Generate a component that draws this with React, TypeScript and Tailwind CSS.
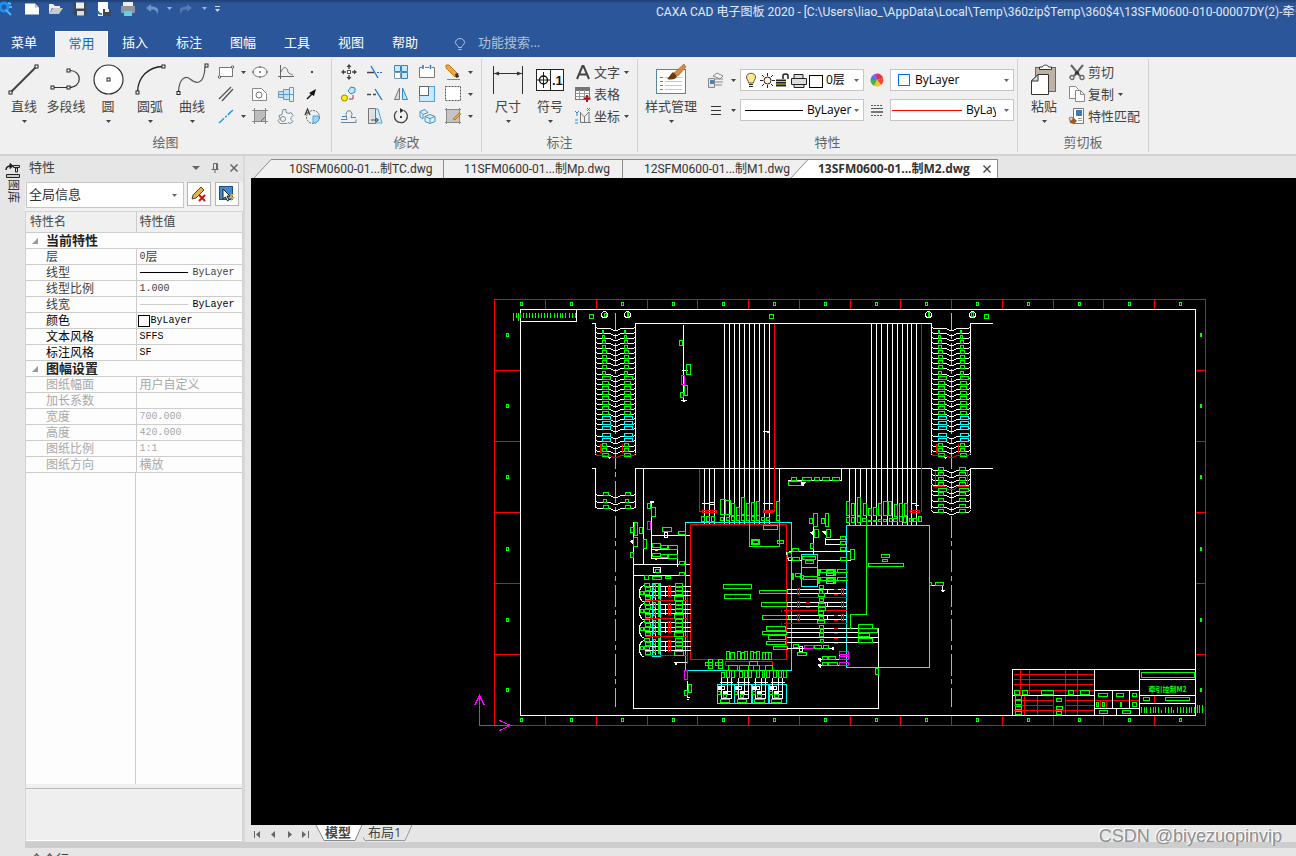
import clsx from 'clsx';
import type { ReactNode } from 'react';

const UI_FONT = "font-['Open_Sans','Noto_Sans_CJK_SC',sans-serif]";
const NARROW_FONT = "font-['Roboto','Noto_Sans_CJK_SC',sans-serif]";

/* ---------- small shared pieces ---------- */

function Caret({ className = 'text-[#444]' }: { className?: string }) {
  return (
    <svg className={clsx('h-[3px] w-[5px] shrink-0', className)} viewBox="0 0 5 3" fill="currentColor">
      <path d="M0 0h5L2.5 3z" />
    </svg>
  );
}

interface IconProps {
  size?: 'sm' | 'lg';
  children: ReactNode;
}

// Stroke-based drawing on an 18px (sm) or 36px (lg) grid
function Icon({ size = 'sm', children }: IconProps) {
  return (
    <svg
      className={size === 'lg' ? 'h-9 w-9 shrink-0' : 'h-[18px] w-[18px] shrink-0'}
      viewBox={size === 'lg' ? '0 0 36 36' : '0 0 18 18'}
      fill="none"
      stroke="#555"
      strokeWidth={1}
    >
      {children}
    </svg>
  );
}

function Handle({ x, y }: { x: number; y: number }) {
  return <rect x={x - 1.5} y={y - 1.5} width={3} height={3} fill="#fff" stroke="#222" />;
}

/* ---------- ribbon icons ---------- */

const bigIcons = {
  line: (
    <Icon size="lg">
      <path d="M5 31L31 5" stroke="#444" strokeWidth={2} />
      <Handle x={4.5} y={31.5} />
      <Handle x={30.5} y={5.5} />
    </Icon>
  ),
  polyline: (
    <Icon size="lg">
      <path d="M5 26.5h16c14 0 13-17 1-17" stroke="#333" strokeWidth={1.2} />
      <Handle x={4.5} y={26.5} />
      <Handle x={20.5} y={26.5} />
      <Handle x={20.5} y={9.5} />
    </Icon>
  ),
  circle: (
    <Icon size="lg">
      <circle cx={18.5} cy={18.5} r={14.5} fill="#fff" stroke="#333" strokeWidth={1.2} />
      <Handle x={18.5} y={18.5} />
    </Icon>
  ),
  arc: (
    <Icon size="lg">
      <path d="M5.5 31C6 16 16 6 31 5.5" stroke="#222" strokeWidth={1.3} />
      <Handle x={5.5} y={31.5} />
      <Handle x={31.5} y={5.5} />
    </Icon>
  ),
  curve: (
    <Icon size="lg">
      <path d="M4.5 31C5 18 11 14 16 18s14 8 15-12" stroke="#555" strokeWidth={1.2} />
      <Handle x={4.5} y={32} />
      <Handle x={32.5} y={4.5} />
    </Icon>
  ),
  dimension: (
    <Icon size="lg">
      <path d="M3.5 5v28M32.5 5v28M4 12.5h28" stroke="#333" />
      <path d="M4 12.5l5-2v4zM32 12.5l-5-2v4z" fill="#333" stroke="none" />
    </Icon>
  ),
  symbol: (
    <Icon size="lg">
      <rect x={4.5} y={8.5} width={27} height={21} fill="#fff" stroke="#222" />
      <path d="M18.5 8v22M5 19h13M11.5 11v16" stroke="#222" />
      <circle cx={11.5} cy={19} r={4} stroke="#111" strokeWidth={1.4} />
      <text x={20} y={24} fontSize={13} fontWeight={700} fill="#111" stroke="none" fontFamily="Liberation Sans, sans-serif">
        .1
      </text>
    </Icon>
  ),
  styles: (
    <Icon size="lg">
      <rect x={3.5} y={8.5} width={29} height={24} fill="#fff" stroke="#5b82a6" />
      <path d="M7 16.5h3M7 20.5h3M7 24.5h3M7 28.5h3" stroke="#5b82a6" />
      <path d="M12 16.5h17M12 20.5h17M12 24.5h17M12 28.5h17" stroke="#b9c9dc" />
      <path d="M31 3l2 3-8 9-4-3z" fill="#d58b45" stroke="#9a5b22" strokeWidth={0.6} />
      <path d="M20 11l4 4c-1 4-6 4-10 3 3-2 3-5 6-7z" fill="#6b3b10" stroke="none" />
    </Icon>
  ),
  paste: (
    <Icon size="lg">
      <rect x={9.5} y={6.5} width={20} height={24} fill="#beb2a6" stroke="#666" />
      <path d="M13.5 8.5V6h3c0-2.500 6-2.500 6 0h3v2.500z" fill="#fff" stroke="#333" />
      <path d="M12 13.5h10.500v20h-17V20z" fill="#fff" stroke="#333" />
      <path d="M5.500 20H12v-6.500z" fill="#ddd" stroke="#333" />
    </Icon>
  ),
};

const smallIcons = {
  rect: (
    <Icon>
      <rect x={2.5} y={4.5} width={13} height={9} fill="#fff" stroke="#777" />
      <circle cx={2.5} cy={14} r={1.2} fill="#fff" />
      <circle cx={15.5} cy={4} r={1.2} fill="#fff" />
    </Icon>
  ),
  parallel: (
    <Icon>
      <path d="M2 14L14 2M5 16L16 4" stroke="#555" strokeWidth={1.3} />
    </Icon>
  ),
  centerline: (
    <Icon>
      <path d="M2 16L16 3" stroke="#1f9ade" strokeWidth={1.5} strokeDasharray="7 1.5 2 1.5" />
    </Icon>
  ),
  ellipse: (
    <Icon>
      <ellipse cx={9} cy={9} rx={7} ry={5} fill="#fff" stroke="#777" />
      <path d="M9 8v2M8 9h2M9 3v2M9 13v2M1 9h2M15 9h2" stroke="#666" />
    </Icon>
  ),
  shape: (
    <Icon>
      <path d="M1.5 3.5h9l5 5v7h-14z" fill="#fff" stroke="#888" />
      <circle cx={8} cy={10} r={3} stroke="#777" />
    </Icon>
  ),
  hatch: (
    <Icon>
      <rect x={3.5} y={3.5} width={11} height={11} fill="#bdbdbd" stroke="#777" />
      <path d="M1 3.5h16M1 14.5h16M3.5 1v16M14.5 1v16" stroke="#888" />
      <path d="M10 14l4-4" stroke="#666" />
    </Icon>
  ),
  formula: (
    <Icon>
      <path d="M3.5 2v14M1 13.5h16" stroke="#666" />
      <path d="M4 9c2-6 6-6 7 0 1 2 3 2 5 3" stroke="#777" />
    </Icon>
  ),
  shaft: (
    <Icon>
      <path d="M1.5 6.5h5v6h-5zM6.5 4.5h6v10h-6z" fill="#bfe1f5" stroke="#7d95a8" />
      <path d="M12.5 2.5h4v14h-4z" fill="#dff1fb" stroke="#5d9bce" />
      <path d="M1 9.5h16" stroke="#5d9bce" />
    </Icon>
  ),
  gear: (
    <Icon>
      <path
        d="M6 2.500h3v3l3 1 2-1 2 3-2 2v2l2 2-3 2-2-1-1 1H3l-2-3 2-2-1-3 3-1z"
        fill="#f4f4f4"
        stroke="#7b8b99"
      />
      <circle cx={6} cy={12} r={2.5} stroke="#7b8b99" />
    </Icon>
  ),
  point: (
    <Icon>
      <rect x={8} y={8} width={2} height={2} fill="#444" stroke="none" />
    </Icon>
  ),
  arrow: (
    <Icon>
      <path d="M4 14l6-6" stroke="#111" strokeWidth={1.5} />
      <path d="M13 4l-2 7-5-3z" fill="#111" stroke="none" />
    </Icon>
  ),
  region: (
    <Icon>
      <circle cx={10} cy={10} r={6.5} stroke="#666" strokeDasharray="2 1" />
      <path d="M10 9h6v3a6 6 0 0 1-6 4z" fill="#9fd6f5" stroke="#4aa3df" />
      <path d="M2 8l2.500-6L7 8M3 6h3.500" stroke="#333" strokeWidth={1.2} />
    </Icon>
  ),
  move: (
    <Icon>
      <path d="M9 2v4M9 12v4M2 9h4M12 9h4" stroke="#444" strokeWidth={1.5} />
      <path d="M9 1L6.500 4h5zM9 17l-2.500-3h5zM1 9l3-2.500v5zM17 9l-3-2.500v5z" fill="#444" stroke="none" />
      <rect x={7.5} y={7.5} width={3} height={3} fill="#fff" stroke="#555" />
    </Icon>
  ),
  trim: (
    <Icon>
      <path d="M1 9.5h7" stroke="#444" strokeWidth={1.5} />
      <path d="M5 3l7 12" stroke="#1d74c4" strokeWidth={1.3} />
      <path d="M11 9.5h6" stroke="#1d74c4" strokeDasharray="2 1" />
    </Icon>
  ),
  array: (
    <Icon>
      <path d="M2.5 2.5h6v6h-6zM9.5 2.5h6v6h-6zM9.5 9.5h6v6h-6z" fill="#c8eafc" stroke="#2d87c9" />
      <path d="M2.5 9.5h6v6h-6z" fill="#fff" stroke="#7c96a8" />
    </Icon>
  ),
  breakRect: (
    <Icon>
      <path d="M4 4.500H1.500v10h15v-10H14M7 4.500h4" fill="#fff" stroke="#777" />
      <path d="M5 2v4M12.5 2v4" stroke="#1d74c4" strokeWidth={1.5} />
    </Icon>
  ),
  erase: (
    <Icon>
      <path d="M2 2l3 0 9 9-3 3-9-9z" fill="#f3a73b" stroke="#c07a1a" />
      <path d="M11 11l3-1 1 4-3 1z" fill="#333" stroke="none" />
      <path d="M3 16.5h13" stroke="#888" />
    </Icon>
  ),
  copyMove: (
    <Icon>
      <circle cx={4.5} cy={13} r={3} fill="#fff200" stroke="#8f8612" />
      <path d="M8 6l3-4 4 1v4l-4 2z" fill="#bfe6fb" stroke="#2d87c9" />
      <path d="M9 14h4v-4" stroke="#a33" />
    </Icon>
  ),
  extend: (
    <Icon>
      <path d="M1 9.5h4M7 9.5h3" stroke="#444" strokeWidth={1.5} />
      <path d="M9 4l7 11" stroke="#1d74c4" strokeWidth={1.3} />
    </Icon>
  ),
  mirror: (
    <Icon>
      <path d="M7.5 3v11.500h-5z" fill="#ddd" stroke="#777" />
      <path d="M10.5 3v11.500h5z" fill="#bfe6fb" stroke="#2d87c9" />
    </Icon>
  ),
  scale: (
    <Icon>
      <rect x={1.5} y={1.5} width={15} height={15} fill="#c8eafc" stroke="#4aa3df" />
      <rect x={1.5} y={1.5} width={9} height={9} fill="#fff" stroke="#666" />
    </Icon>
  ),
  select: (
    <Icon>
      <rect x={1.5} y={1.5} width={15} height={14} fill="#fff" stroke="#555" strokeDasharray="2 1" />
    </Icon>
  ),
  offset: (
    <Icon>
      <path d="M1 12.5h6l-1-5c0-5 6-5 6 0l-1 3h5M1 15.5h15v-3" stroke="#6b8396" />
      <path d="M2 9.5h4" stroke="#2d87c9" />
    </Icon>
  ),
  stretch: (
    <Icon>
      <path d="M9 2h3l4 14H9z" fill="#d4eefb" stroke="#4aa3df" />
      <path d="M2.5 1.5h7v15h-7z" fill="#e0e0e0" stroke="#777" />
      <path d="M5 13h7M10 11l2.500 2-2.500 2" stroke="#444" />
    </Icon>
  ),
  rotate: (
    <Icon>
      <path d="M5 4a6.500 6.500 0 1 0 7-.5" stroke="#444" strokeWidth={1.3} />
      <path d="M8 1l4 2.500-4 2.500z" fill="#333" stroke="none" />
      <rect x={8} y={9} width={2} height={2} fill="#333" stroke="none" />
    </Icon>
  ),
  explode: (
    <Icon>
      <path
        d="M2 4.500l5-2 3 3-5 2zM2 5v5l3 2V7.500M7 9.500l5-2 5 2v5l-5 2-5-2zM7 9.500l5 2 5-2M12 11.500v5"
        fill="#dff1fb"
        stroke="#3f92cd"
      />
    </Icon>
  ),
  hatchEdit: (
    <Icon>
      <rect x={2.5} y={2.5} width={13} height={13} fill="#c4c4c4" stroke="#777" />
      <path d="M1 2.5h16M1 15.5h16M2.5 1v16M15.5 1v16" stroke="#888" />
      <path d="M9 12l6-6 2 1-6 6z" fill="#f3a73b" stroke="#8a5a15" strokeWidth={0.6} />
    </Icon>
  ),
  text: (
    <Icon>
      <path d="M3 16L8.500 3h1L15 16M5.500 11.500h7" stroke="#444" strokeWidth={2} />
    </Icon>
  ),
  table: (
    <Icon>
      <rect x={1.5} y={2.5} width={14} height={12} fill="#fff" stroke="#777" />
      <path d="M1.5 3h14v2.500h-14z" fill="#777" stroke="#777" />
      <path d="M1.5 8.500h14M1.500 11.500h14M5.500 5v9.500M10.500 5v9.500" stroke="#999" />
      <path d="M13 10v7M9.500 13.500h7" stroke="#b3171b" strokeWidth={2} />
    </Icon>
  ),
  coord: (
    <Icon>
      <path d="M6.5 5v10.500H17M6.500 6l4 4v5M10 10l5-5v10" stroke="#777" />
      <path d="M1 4l2 2 2-2M3 6v3M13 1l3 3M16 1l-3 3M1 13h3M1 16h3" stroke="#2d87c9" />
    </Icon>
  ),
  layers: (
    <Icon>
      <path d="M6 5l4-3 6 3-3 3zM8 8h8M8 11h8M8 14h7" stroke="#888" />
      <path d="M1.5 7.500h6v9h-6z" fill="#dbe6ef" stroke="#888" />
      <rect x={3} y={9} width={4} height={4} fill="#4d86b5" stroke="none" />
    </Icon>
  ),
  lineStyle: (
    <Icon>
      <path d="M4 5.500h10M4 9.500h10M4 13.500h10" stroke="#333" />
    </Icon>
  ),
  lineWidth: (
    <Icon>
      <path d="M3 4.500h12M3 14.500h12" stroke="#555" strokeDasharray="2 1" />
      <path d="M3 7.500h12" stroke="#555" />
      <path d="M3 11h12" stroke="#777" strokeWidth={2} />
    </Icon>
  ),
  colorWheel: (
    <Icon>
      <g stroke="none">
        <path d="M9 9V2.500A6.500 6.500 0 0 1 15 7z" fill="#e3353b" />
        <path d="M9 9l6-2a6.500 6.500 0 0 1-2 7z" fill="#f0483a" />
        <path d="M9 9l4 5a6.500 6.500 0 0 1-7 .7z" fill="#f6c21c" />
        <path d="M9 9l-3 5.700A6.500 6.500 0 0 1 2.500 9z" fill="#46b04a" />
        <path d="M9 9H2.500A6.500 6.500 0 0 1 5 4z" fill="#3f7fe8" />
        <path d="M9 9L5 4a6.500 6.500 0 0 1 4-1.500z" fill="#a34be0" />
      </g>
    </Icon>
  ),
  cut: (
    <Icon>
      <path d="M3 2l9 11M15 2L6 13" stroke="#666" strokeWidth={2} />
      <path d="M7 8.500h4v3H7z" fill="#333" stroke="none" />
      <circle cx={4} cy={14.5} r={2} stroke="#666" strokeWidth={1.3} />
      <circle cx={14} cy={14.5} r={2} stroke="#666" strokeWidth={1.3} />
    </Icon>
  ),
  copy: (
    <Icon>
      <path d="M1.5 1.5h6l3 3v9h-9z" fill="#fff" stroke="#888" />
      <path d="M7.5 5.5h5l4 4v7h-9z" fill="#fff" stroke="#888" />
      <path d="M12.5 5.5v4h4" stroke="#888" />
    </Icon>
  ),
  match: (
    <Icon>
      <path d="M5.5 1.5h10v15h-10z" fill="#fff" stroke="#777" />
      <rect x={8} y={3} width={6} height={6} fill="#3d7ab5" stroke="none" />
      <path d="M10 11.5h4M10 13.5h4" stroke="#999" />
      <path d="M1 11l4-1 4 4-3 3-4-1z" fill="#a55b18" stroke="none" />
      <path d="M1 11l3-1 1 2-2 2z" fill="#ddd" stroke="#888" />
    </Icon>
  ),
};

/* ---------- ribbon building blocks ---------- */

function BigButton({ icon, label, menu = true, wide }: { icon: ReactNode; label: string; menu?: boolean; wide?: boolean }) {
  return (
    <button className={clsx('flex shrink-0 flex-col items-center whitespace-nowrap', wide ? 'w-[58px]' : 'w-[42px]')}>
      {icon}
      <span className="h-5 leading-[19px]">{label}</span>
      <span className="flex h-2 items-center">{menu && <Caret />}</span>
    </button>
  );
}

function SmallButton({ icon, label, menu }: { icon: ReactNode; label: string; menu?: boolean }) {
  return (
    <button aria-label={label} className="flex h-[22px] shrink-0 items-center">
      <span className="flex w-[26px] justify-center">{icon}</span>
      {menu && <Caret className="ml-0.5 text-[#444]" />}
    </button>
  );
}

function TextButton({ icon, label, menu }: { icon: ReactNode; label: string; menu?: boolean }) {
  return (
    <button className="flex h-[22px] items-center gap-0.5 leading-5 whitespace-nowrap">
      {icon}
      {label}
      {menu && <Caret className="ml-0.5 text-[#444]" />}
    </button>
  );
}

function Group({ title, width, inset, children }: { title: string; width: string; inset: string; children: ReactNode }) {
  return (
    <section className={clsx('my-0.5 flex shrink-0 flex-col border-r border-[#d2d2d2]', width)}>
      <div className={clsx('flex flex-1 items-start pt-0.5', inset)}>{children}</div>
      <h2 className="h-5 text-center leading-5 text-[#666]">{title}</h2>
    </section>
  );
}

function PropertySelect({ label, text, art, className }: { label: string; text: string; art: ReactNode; className?: string }) {
  return (
    <div className="flex h-[22px] w-[124px] shrink-0 items-center overflow-hidden border border-[#c6c6c6] bg-white pr-1">
      {art}
      <select aria-label={label} className={clsx('min-w-0 flex-1 appearance-none bg-transparent text-[12px] leading-5 text-black', className)}>
        <option>{text}</option>
      </select>
      <Caret className="text-[#666]" />
    </div>
  );
}

function LayerArt() {
  return (
    <svg className="h-5 w-[85px] shrink-0" viewBox="0 0 85 20" fill="none" stroke="#222">
      <path d="M7.5 13c0-3-2-3-2-6 0-5 9-5 9 0 0 3-2 3-2 6z" fill="#ffe98a" stroke="#555" />
      <path d="M8 14.500h4M8 16.500h4" />
      <circle cx={26.5} cy={10.5} r={3.5} fill="#fff3d8" />
      <path d="M26.5 3v3M26.500 15v3M19 10.500h3M31 10.500h3M21 5l2 2M30 14l2 2M32 5l-2 2M23 14l-2 2" />
      <path d="M35 9.500h10v7H35z" fill="#222" stroke="none" />
      <path d="M35 11.500h10M35 14h10" stroke="#ff0" strokeWidth={0.8} />
      <path d="M42 9V5.500c0-2 5-2 5 0V9" strokeWidth={1.5} />
      <path d="M53 8V4.500h9V8M50.500 8.500h15v6h-15zM53 14.500v3h10v-3" fill="#ddd" />
      <rect x={68.5} y={5.5} width={13} height={12} fill="#fff" stroke="#000" />
    </svg>
  );
}

function Ribbon() {
  const i = smallIcons;
  return (
    <div className="flex h-[99px] shrink-0 overflow-hidden border-b-2 border-[#d2d2d2] bg-[#f0f0f0] text-[13px] text-[#444]">
      <Group title="绘图" width="w-[332px]" inset="pl-[3px]">
        <BigButton icon={bigIcons.line} label="直线" />
        <BigButton icon={bigIcons.polyline} label="多段线" menu={false} />
        <BigButton icon={bigIcons.circle} label="圆" />
        <BigButton icon={bigIcons.arc} label="圆弧" />
        <BigButton icon={bigIcons.curve} label="曲线" />
        <div className="grid grid-cols-[34px_26px_26px_26px]">
          <SmallButton icon={i.rect} label="矩形" menu />
          <SmallButton icon={i.ellipse} label="椭圆" />
          <SmallButton icon={i.formula} label="公式曲线" />
          <SmallButton icon={i.point} label="点" />
          <SmallButton icon={i.parallel} label="平行线" />
          <SmallButton icon={i.shape} label="多边形" />
          <SmallButton icon={i.shaft} label="孔轴" />
          <SmallButton icon={i.arrow} label="箭头" />
          <SmallButton icon={i.centerline} label="中心线" menu />
          <SmallButton icon={i.hatch} label="剖面线" />
          <SmallButton icon={i.gear} label="齿形" />
          <SmallButton icon={i.region} label="局部放大" />
        </div>
      </Group>
      <Group title="修改" width="w-[150px]" inset="pl-1">
        <div className="grid grid-cols-[26px_26px_26px_26px_36px]">
          <SmallButton icon={i.move} label="平移" />
          <SmallButton icon={i.trim} label="裁剪" />
          <SmallButton icon={i.array} label="阵列" />
          <SmallButton icon={i.breakRect} label="打断" />
          <SmallButton icon={i.erase} label="删除" menu />
          <SmallButton icon={i.copyMove} label="平移复制" />
          <SmallButton icon={i.extend} label="延伸" />
          <SmallButton icon={i.mirror} label="镜像" />
          <SmallButton icon={i.scale} label="缩放" />
          <SmallButton icon={i.select} label="选择" menu />
          <SmallButton icon={i.offset} label="等距线" />
          <SmallButton icon={i.stretch} label="拉伸" />
          <SmallButton icon={i.rotate} label="旋转" />
          <SmallButton icon={i.explode} label="分解" />
          <SmallButton icon={i.hatchEdit} label="编辑剖面线" menu />
        </div>
      </Group>
      <Group title="标注" width="w-[156px]" inset="pl-[5px]">
        <BigButton icon={bigIcons.dimension} label="尺寸" />
        <BigButton icon={bigIcons.symbol} label="符号" />
        <div className="flex flex-col pl-[3px]">
          <TextButton icon={i.text} label="文字" menu />
          <TextButton icon={i.table} label="表格" />
          <TextButton icon={i.coord} label="坐标" menu />
        </div>
      </Group>
      <Group title="特性" width="w-[380px]" inset="pl-1">
        <BigButton icon={bigIcons.styles} label="样式管理" wide />
        <div className="flex flex-col gap-2 pt-2 pl-[3px]">
          <div className="flex items-center gap-1">
            <SmallButton icon={i.layers} label="图层" menu />
            <PropertySelect label="图层" text="0层" art={<LayerArt />} />
            {i.colorWheel}
            <PropertySelect
              label="颜色"
              text="ByLayer"
              art={<span className="mr-[5px] ml-[7px] h-3 w-3 shrink-0 border border-[#0078d7]" />}
            />
          </div>
          <div className="flex items-center gap-1">
            <SmallButton icon={i.lineStyle} label="线型管理" menu />
            <PropertySelect
              label="线型"
              text="ByLayer"
              art={<span className="mr-1 ml-1 h-px w-[58px] shrink-0 bg-black" />}
            />
            {i.lineWidth}
            <PropertySelect
              label="线宽"
              text="ByLayer"
              className="mr-2"
              art={<span className="mr-1 ml-px h-px w-[70px] shrink-0 bg-[#f00]" />}
            />
          </div>
        </div>
      </Group>
      <Group title="剪切板" width="w-[131px]" inset="pl-[5px]">
        <BigButton icon={bigIcons.paste} label="粘贴" />
        <div className="flex flex-col pl-[3px]">
          <TextButton icon={i.cut} label="剪切" />
          <TextButton icon={i.copy} label="复制" menu />
          <TextButton icon={i.match} label="特性匹配" />
        </div>
      </Group>
    </div>
  );
}

/* ---------- title bar and menu ---------- */

const MENU = ['插入', '标注', '图幅', '工具', '视图', '帮助'];

function QuickAccess() {
  return (
    <div className="flex w-[656px] shrink-0 items-center">
      <svg className="h-[18px] w-[230px]" viewBox="0 0 230 18" fill="none">
        <circle cx={4} cy={7} r={4} stroke="#1d8ff2" strokeWidth={3} />
        <path d="M6 10l5 5M8 3l3 1M9 7h3" stroke="#45b6ff" strokeWidth={2} />
        <path d="M25 3.500h10l4 4v7H25z" fill="#fff" />
        <path d="M35 3.500l4 4h-4z" fill="#bbb" />
        <path d="M49 14V4h4l2 2h5v2H52z" fill="#eee" />
        <path d="M49 14l4-6h10l-4 6z" fill="#c9c9c9" />
        <path d="M73.500 2.500h13v13h-13z" fill="#3c4854" />
        <path d="M76 2.500h8v6h-8z" fill="#eee" />
        <path d="M77 11h7v4.500h-7z" fill="#ddd" />
        <path d="M98 2h10v14H98z" fill="#fff" />
        <path d="M103 9h8v7h-8z" fill="#3c4854" />
        <path d="M105 9h4v3h-4z" fill="#eee" />
        <path d="M98 11c0 2 2 3 4 3" stroke="#1d74c4" strokeWidth={2} />
        <path d="M123 2h10v5h-10z" fill="#eee" />
        <path d="M121 6h14v7h-14z" fill="#8d949c" />
        <path d="M124 11h8v5h-8z" fill="#5fd0ea" />
        <path d="M151 4l-5 4 5 4V9.500c4 0 6 1 6 5 3-6 0-8-6-8z" fill="#6f93c8" />
        <path d="M167 7h5l-2.500 3z" fill="#9fb6da" />
        <path d="M187 4l5 4-5 4V9.500c-4 0-6 1-6 5-3-6 0-8 6-8z" fill="#5678b0" />
        <path d="M202 7h5l-2.500 3z" fill="#9fb6da" />
        <path d="M215 6.500h5" stroke="#cfdaeb" />
        <path d="M215 9h5l-2.500 3z" fill="#cfdaeb" />
      </svg>
    </div>
  );
}

function Header() {
  return (
    <header className="shrink-0 overflow-hidden bg-[linear-gradient(#1e4174,#2b579a_4px)] text-[13px] text-white">
      <div className="flex h-[31px] items-start overflow-hidden whitespace-nowrap">
        <QuickAccess />
        <h1 className={clsx('text-[12px] leading-6 text-[#e3e9f3]', NARROW_FONT)}>
          CAXA CAD 电子图板 2020 - [C:\Users\liao_\AppData\Local\Temp\360zip$Temp\360$4\13SFM0600-010-00007DY(2)-牵引制
        </h1>
      </div>
      <nav className="flex h-[26px] items-stretch">
        <button className="mr-[7px] w-12 pb-0.5">菜单</button>
        <button className="w-[53px] border-x border-t border-white bg-[#f0f0f0] pb-0.5 text-[#1a66b8]">常用</button>
        {MENU.map((m) => (
          <button key={m} className="w-[54px] pb-0.5">
            {m}
          </button>
        ))}
        <label className="ml-[22px] flex items-center gap-3 pb-0.5 text-[#b4c1d6]">
          <svg className="mt-1 h-3.5 w-3" viewBox="0 0 12 14" fill="none" stroke="#b4c1d6">
            <path d="M4.5 9.500c0-2-3-2.500-3-5a4.500 4 0 0 1 9 0c0 2.500-3 3-3 5zM4.500 11.500h3" />
          </svg>
          <input aria-label="功能搜索" placeholder="功能搜索..." className="w-28 bg-transparent placeholder:text-[#b4c1d6]" />
        </label>
      </nav>
    </header>
  );
}

/* ---------- property panel ---------- */

interface Row {
  name: string;
  value: ReactNode;
}

const MONO = "font-['Liberation_Mono',monospace] text-[10px]";

const CURRENT: Row[] = [
  { name: '层', value: <><span className={MONO}>0</span>层</> },
  {
    name: '线型',
    value: (
      <span className={clsx('flex items-center gap-[5px]', MONO)}>
        <span className="h-px w-12 bg-black" />
        ByLayer
      </span>
    ),
  },
  { name: '线型比例', value: <span className={MONO}>1.000</span> },
  {
    name: '线宽',
    value: (
      <span className={clsx('flex items-center gap-[5px] text-black', MONO)}>
        <span className="h-px w-12 bg-[#ccc]" />
        ByLayer
      </span>
    ),
  },
  {
    name: '颜色',
    value: (
      <span className={clsx('-ml-0.5 flex items-center gap-px', MONO)}>
        <span className="h-3 w-3 border border-black" />
        ByLayer
      </span>
    ),
  },
  { name: '文本风格', value: <span className={MONO}>SFFS</span> },
  { name: '标注风格', value: <span className={MONO}>SF</span> },
];

const SHEET: Row[] = [
  { name: '图纸幅面', value: '用户自定义' },
  { name: '加长系数', value: '' },
  { name: '宽度', value: <span className={MONO}>700.000</span> },
  { name: '高度', value: <span className={MONO}>420.000</span> },
  { name: '图纸比例', value: <span className={MONO}>1:1</span> },
  { name: '图纸方向', value: '横放' },
];

function SectionRow({ title }: { title: string }) {
  return (
    <tr className="border-b border-[#ccc] text-[#222]">
      <th colSpan={2} scope="rowgroup" className="p-0 text-left text-[13px] font-bold">
        <div className="flex h-[15px] items-center gap-2 pl-1.5 leading-[15px]">
          <svg className="h-1.5 w-1.5" viewBox="0 0 6 6" fill="#999">
            <path d="M6 0v6H0z" />
          </svg>
          {title}
        </div>
      </th>
    </tr>
  );
}

function Rows({ rows, muted }: { rows: Row[]; muted?: boolean }) {
  return rows.map((row, n) => (
    <tr key={row.name} className={clsx('border-b border-[#ccc]', muted ? 'text-[#a8a8a8]' : n > 3 ? 'text-black' : 'text-[#404040]')}>
      <td className="border-r border-[#ccc] p-0">
        <div className="flex h-[15px] items-center pl-5 leading-[15px]">{row.name}</div>
      </td>
      <td className="p-0">
        <div className="flex h-[15px] items-center pl-[3px] leading-[15px]">{row.value}</div>
      </td>
    </tr>
  ));
}

function PropertyPanel() {
  return (
    <aside className="flex w-[220px] shrink-0 flex-col border-r-2 border-[#d8d8d8] bg-[#f0f0f0]">
      <div className="flex h-[26px] items-center bg-[#e6e6e6] pb-0.5 pl-1 text-[13px] text-[#444]">
        <h2 className="flex-1">特性</h2>
        <button aria-label="菜单" className="flex w-[19px] justify-center">
          <svg className="h-1.5 w-2" viewBox="0 0 8 6" fill="#666"><path d="M0 1h8L4 5z" /></svg>
        </button>
        <button aria-label="固定" className="flex w-[19px] justify-center">
          <svg className="h-2.5 w-2" viewBox="0 0 8 10" fill="none" stroke="#666"><path d="M2.500 6V.5h4V6M.5 6.500h7M4 7v3M5.500 1v5" /></svg>
        </button>
        <button aria-label="关闭" className="flex w-[19px] justify-center">
          <svg className="h-2 w-2" viewBox="0 0 8 8" fill="none" stroke="#666" strokeWidth={1.5}><path d="M.5.5l7 7M7.500.5l-7 7" /></svg>
        </button>
      </div>
      <div className="flex h-[29px] items-start gap-[3px] bg-[#f0f0f0] pl-px">
        <div className="flex h-[26px] w-[158px] shrink-0 items-center border border-[#c6c6c6] bg-white pr-1.5 pl-0.5">
          <select aria-label="选择对象" className="min-w-0 flex-1 appearance-none bg-transparent text-[13px] text-[#333]">
            <option>全局信息</option>
          </select>
          <Caret className="text-[#666]" />
        </div>
        <button aria-label="清除" className="flex h-6 w-6 shrink-0 items-center justify-center border border-[#b4b4b4] bg-white">
          <svg className="h-[18px] w-[18px]" viewBox="0 0 18 18" fill="none">
            <path d="M2 14l1-4 8-8 3 3-8 8z" fill="#e8b23e" stroke="#444" />
            <path d="M9 10l6 6M15 10l-6 6" stroke="#c8141a" strokeWidth={2} />
          </svg>
        </button>
        <button aria-label="快速选择" className="ml-px flex h-6 w-6 shrink-0 items-center justify-center border border-[#b4b4b4] bg-white">
          <svg className="h-[18px] w-[18px]" viewBox="0 0 18 18" fill="none">
            <rect x={1.5} y={1.5} width={13} height={13} fill="#3d8ad4" stroke="#1d4f86" />
            <path d="M5 4v10l2.500-2 2 4 1.500-1-2-4h3z" fill="#fff" stroke="#222" />
            <path d="M13 9l-2 4h3l-2 4 5-5h-3l2-3z" fill="#f5a11f" />
          </svg>
        </button>
      </div>
      <div className="flex min-h-0 flex-1 flex-col border border-[#d4d4d4] bg-[#fdfdfd]">
        <table className="w-full shrink-0 table-fixed border-collapse text-[12px]">
          <colgroup>
            <col className="w-[110px]" />
            <col />
          </colgroup>
          <thead>
            <tr className="border-b border-[#ccc] bg-[#f0f0f0] text-[#444]">
              <th className="border-r border-[#ccc] p-0 text-left font-normal">
                <div className="h-5 pl-1 leading-5">特性名</div>
              </th>
              <th className="p-0 text-left font-normal">
                <div className="h-5 pl-[3px] leading-5">特性值</div>
              </th>
            </tr>
          </thead>
          <tbody>
            <SectionRow title="当前特性" />
            <Rows rows={CURRENT} />
            <SectionRow title="图幅设置" />
            <Rows rows={SHEET} muted />
          </tbody>
        </table>
        <div className="w-[110px] flex-1 border-r border-[#ccc]" />
        <div className="flex h-[57px] shrink-0 flex-col border-b border-white bg-[#efefef] pt-1">
          <div className="flex-1 border-t border-[#bbb]" />
        </div>
      </div>
    </aside>
  );
}

/* ---------- drawing ---------- */

// Details are listed in thirds of a unit, relative to the origin of their block.
const numbers = (item: string) => item.trim().split(' ').map(Number);

function boxes(ox: number, oy: number, data: string) {
  return data
    .split(',')
    .map((item) => {
      const [x1, y1, x2, y2] = numbers(item).map((v, n) => Math.floor(v / 3) + (n % 2 ? oy : ox));
      return `M${x1} ${y1}H${x2}V${y2}H${x1}Z`;
    })
    .join('');
}

function lines(ox: number, oy: number, data: string) {
  return data
    .split(',')
    .map((item) => {
      const v = numbers(item).map((c, n) => Math.floor(c / 3) + (n % 2 ? oy : ox));
      return 'M' + v.join(' ');
    })
    .join('');
}

const verticals = (xs: number[], y1: number, y2: number) => xs.map((x) => `M${x} ${y1}V${y2}`).join('');

const COLUMNS = Array.from({ length: 13 }, (_, n) => 545 + Math.round(n * 50.77));
const ROWS = [370, 441, 512, 583, 654];

const LABEL_Y = [124, 140, 155, 170, 185, 200, 215, 230, 248, 263, 278, 293, 308, 323, 338, 353, 368, 383, 398, 413, 432, 447, 462, 477, 492];
const LABEL_W = [1, 2, 3, 3, 4, 4, 4, 4, 3, 8, 6, 6, 6, 6, 6, 6, 6, 8, 8, 8, 8, 8, 4, 4, 6];
const LOWER_Y = [536, 551, 566, 581, 597, 611, 628, 645, 660];

const wave = (x1: number, x2: number, y: number) => {
  const mid = Math.round((x1 + x2) / 2);
  return `M${x1} ${y - 2}l2 2H${mid - 5}l3 2H${mid + 2}l3 -2H${x2 - 2}l2 -2`;
};

function Harness({ x1, x2, left, right }: { x1: number; x2: number; left: number; right: number }) {
  return (
    <g>
      <path d={wave(x1, x2, 328) + LABEL_Y.slice(0, -1).map((y) => wave(x1, x2, 290 + Math.round((y + 5) / 3))).join('')} stroke="#fff" />
      {LABEL_Y.map((y, n) => {
        const top = 290 + Math.floor(y / 3) - 1;
        const w = LABEL_W[n];
        return (
          <path
            key={y}
            d={`M${left} ${top}h${w}v3h-${w}zM${right} ${top}h${w}v3h-${w}z`}
            stroke={n > 16 && n < 22 ? '#0ff' : '#0f0'}
          />
        );
      })}
      <path
        d={`${wave(x1, x2, 455)}M${left - 2} 443v9M${left - 1} 443v9M${right - 2} 443v9`}
        stroke="#f00"
      />
      <path d={`M${left + 5} 457h3M${left + 6} 458h1`} stroke="#fff" />
    </g>
  );
}

const MODULES = [0, 51, 103, 154];
const STACKS = [0, 54, 108, 165];

function Sheet() {
  return (
    <g>
      <path
        d={
          'M494 299H1205V725H494Z' +
          COLUMNS.map((x) => `M${x} 299v10M${x} 715v10`).join('') +
          ROWS.map((y) => `M494 ${y}h26M1195 ${y}h10`).join('')
        }
        stroke="#f00"
      />
      <path d="M520 309H1195V715H520ZM520 321H576V309" stroke="#fff" />
      <path
        d={
          [520, ...COLUMNS].map((x, n) => `M${n ? x + 25 : 520} 302h2v3h-2zM${n ? x + 25 : 520} 718h2v3h-2z`).join('') +
          [333, 404, 475, 547, 618, 688].map((y) => `M506 ${y}h2v3h-2zM1200 ${y}h1v3h-1z`).join('') +
          verticals([513, 516, 518, 520, 523, 526, 529, 532, 535, 538, 541, 544, 547, 550, 554, 557, 560, 562, 565, 569, 572, 575], 312, 317) +
          verticals([513, 518], 317, 320)
        }
        stroke="#0f0"
      />
      <path d="M589 314h4v4h-4zM769 314h4v4h-4zM984 314h4v4h-4zM604 313h2v3h-2zM627 312h1v4h-1zM928 312h1v4h-1zM971 312h2v4h-2z" stroke="#0f0" />
      {[604, 627, 928, 972].map((x) => (
        <circle key={x} cx={x} cy={314} r={3} stroke="#fff" />
      ))}
      <path d="M615 312V706M951 312V706" stroke="#0ff" strokeDasharray="22 3.5 5 4" strokeDashoffset={4} />
    </g>
  );
}

function Wiring() {
  return (
    <g>
      <path
        d={
          'M591 323H595V454M635 454V323H931V454M970 454V323H992' +
          'M591 468H595V507M635 507V468H931V508M970 508V468H992' +
          verticals([724, 729, 734, 739, 744, 749, 754, 759, 764, 769], 323, 524) +
          verticals([871, 876, 881, 887, 892, 897, 902, 907, 911, 916], 323, 525) +
          verticals([704, 709, 714, 779], 468, 524) +
          verticals([849, 855, 860, 866], 468, 525) +
          'M643 468V564M841 468V480H787M683 324V400M680 400h6M682 401h2M681 370h6' +
          wave(595, 635, 495) + wave(595, 635, 502) + wave(595, 635, 508) +
          LOWER_Y.map((y) => wave(931, 970, 290 + Math.round((y + 5) / 3))).join('') +
          'M762 431h7M766 432h3M762 503h10M910 503h6M914 505h4'
        }
        stroke="#fff"
      />
      <path
        d="M774 323V511H763M921 323V511M699 468V511H702M702 510h14v2h-14zM763 510h9v2h-9zM910 510h9v2h-9zM935 470v14M967 470v14M931 484l2 2h12l3 3h6l3 -3h11"
        stroke="#f00"
      />
      <path
        d={
          boxes(480, 290, '598 151 608 166,619 223 632 254,613 286 623 316,600 307 610 322,370 607 386 616,370 628 380 637,370 646 386 655,436 607 452 616,436 628 446 637,436 646 452 655') +
          boxes(740, 290, '154 562 170 570,187 562 214 571,223 562 239 571,247 562 269 571,277 562 298 571,145 573 185 586') +
          LOWER_Y.map((y, n) => {
            const top = 290 + Math.floor(y / 3) - 1;
            const w = n === 4 ? 8 : 5;
            return `M938 ${top}h${w}v3h-${w}zM959 ${top}h${w + 1}v3h-${w + 1}z`;
          }).join('')
        }
        stroke="#0f0"
      />
      <path d="M681 375h3v9h-3z" stroke="#f0f" />
      <path d="M800 481h6l-3 4h-2z" fill="#fff" />
    </g>
  );
}

function MainCabinet() {
  return (
    <g>
      <path
        d={lines(620, 490, '40 93 40 655 775 655 775 415,40 223 212 223,40 256 212 256,94 30 94 205 172 205,94 178 172 178 172 228,94 136 212 136,202 570 202 622,198 622 208 622,200 628 206 628,160 517 200 517,243 40 264 40,264 37 284 37,264 43 284 43,430 40 448 40') + boxes(620, 490, '134 127 142 142,100 232 121 247')}
        stroke="#fff"
      />
      <path d={boxes(620, 490, '196 97 514 541,292 583 499 640') + lines(620, 490, '343 583 343 640,394 583 394 640,397 583 397 640,446 583 446 640,449 583 449 640')} stroke="#0ff" />
      <path d={boxes(620, 490, '211 103 499 508,316 514 457 526') + lines(620, 490, '202 298 202 519')} stroke="#f00" />
      <path
        d={
          boxes(
            620,
            490,
            '82 40 92 56,94 52 106 80,32 112 40 128,43 97 53 137,58 112 68 131,41 142 53 170,31 187 41 203,70 148 80 176,128 112 155 125,175 124 196 134,97 160 122 173,122 166 143 176,145 166 172 178,97 190 122 200,122 193 143 203,145 193 172 205,178 214 194 223,178 247 194 256,74 257 86 269,97 259 125 269,136 259 152 266,106 238 119 248,' +
              '244 79 254 94,259 79 269 94,274 79 284 94,301 28 316 74,317 31 331 74,334 40 343 76,349 52 359 76,364 22 374 74,379 40 389 76,394 37 404 76,409 34 419 76,469 34 479 76,469 76 479 92,301 82 311 92,319 82 328 92,334 79 343 92,349 76 359 92,364 76 374 92,379 76 389 92,394 80 404 92,409 76 419 92,424 82 434 92,439 82 449 92,' +
              '430 106 473 119,394 149 419 164,397 152 416 161,473 151 490 161,310 283 394 296,313 313 392 326,418 301 502 311,424 337 502 349,427 376 505 389,439 409 496 421,427 424 499 433,445 436 496 449,439 454 496 464,460 469 502 479,' +
              '319 485 329 509,332 487 342 509,352 485 362 509,363 487 373 509,373 485 383 509,391 484 400 509,400 487 409 509,409 484 418 509,427 487 436 509,436 487 445 509,445 487 454 509,325 526 352 541,358 526 385 541,385 526 400 541,400 526 418 541,436 526 457 541,388 514 412 526,' +
              '304 547 314 563,319 541 328 563,334 541 343 563,358 544 367 563,373 541 383 563,386 541 395 563,409 541 419 563,427 541 434 563,439 541 449 563,460 541 470 563,475 541 485 563,490 541 499 563,256 517 277 526,265 508 277 535,286 517 307 526,295 508 307 535,205 583 214 608,193 601 202 616',
          ) + lines(620, 490, '388 95 388 169 478 169 478 92')
        }
        stroke="#0f0"
      />
      <path d={boxes(620, 490, '82 94 91 119,193 541 202 569')} stroke="#f0f" />
      <path d="M654 548h3v2h-3zM654 557h2v2h-2z" fill="#ff0" />
      <path d="M649 500h4v2h-4zM629 541l3-2v5zM674 661h2v3h-2z" fill="#fff" />

      {/* terminal stacks on the left side */}
      <path d={boxes(620, 490, '97 280 121 499')} stroke="#0ff" />
      {STACKS.map((dy) => (
        <g key={dy}>
          <path
            d={
              lines(620, 490, [289, 304, 316].map((y) => `73 ${y + dy} 212 ${y + dy}`).join(',')) +
              lines(620, 490, `136 ${286 + dy} 136 ${318 + dy},72 ${286 + dy} 64 ${290 + dy} 59 ${302 + dy} 59 ${320 + dy} 64 ${332 + dy} 72 ${338 + dy}`) +
              lines(620, 490, `106 ${286 + dy} 106 ${330 + dy}`)
            }
            stroke="#fff"
          />
          <path d={lines(620, 490, `73 ${331 + dy} 203 ${331 + dy}`) + boxes(620, 490, `145 ${286 + dy} 152 ${319 + dy}`)} stroke="#f00" />
          <path
            d={boxes(
              620,
              490,
              [
                `73 ${280 + dy} 89 ${289 + dy}`,
                `76 ${292 + dy} 91 ${302 + dy}`,
                `73 ${304 + dy} 89 ${314 + dy}`,
                `76 ${319 + dy} 91 ${329 + dy}`,
                `61 ${304 + dy} 70 ${314 + dy}`,
                `166 ${280 + dy} 188 ${289 + dy}`,
                `166 ${292 + dy} 188 ${302 + dy}`,
                `166 ${304 + dy} 188 ${314 + dy}`,
                `163 ${319 + dy} 190 ${331 + dy}`,
                `100 ${283 + dy} 106 ${298 + dy}`,
                `100 ${307 + dy} 106 ${322 + dy}`,
                `115 ${280 + dy} 118 ${326 + dy}`,
              ].join(','),
            )}
            stroke="#0f0"
          />
        </g>
      ))}

      {/* relay modules under the cabinet */}
      {MODULES.map((dx) => (
        <g key={dx}>
          <path
            d={
              lines(620, 490, `${304 + dx} 563 ${304 + dx} 625 ${334 + dx} 625 ${334 + dx} 563,${322 + dx} 563 ${322 + dx} 604,${298 + dx} 577 ${338 + dx} 577`) +
              boxes(620, 490, `${304 + dx} 589 ${314 + dx} 599,${322 + dx} 604 ${333 + dx} 613`)
            }
            stroke="#fff"
          />
          <path d={boxes(620, 490, `${295 + dx} 589 ${305 + dx} 598,${310 + dx} 604 ${320 + dx} 613`)} fill="#fff" stroke="#fff" />
          <path d={boxes(620, 490, `${293 + dx} 604 ${302 + dx} 613,${301 + dx} 628 ${329 + dx} 637,${310 + dx} 613 ${320 + dx} 623`)} stroke="#0f0" />
        </g>
      ))}
    </g>
  );
}

function SideCabinet() {
  return (
    <g>
      <path d={boxes(770, 490, '229 106 478 532,94 193 142 289,169 238 191 256,169 262 191 280') + lines(770, 490, '94 232 142 232')} stroke="#0ff" />
      <path
        d={
          lines(770, 490, '130 67 130 193,166 67 166 85,166 142 166 163 229 163,166 148 229 148,55 184 241 184 241 211 142 211,94 211 55 211 49 187,478 286 517 286 517 300,511 302 523 302,514 305 520 305,50 475 185 475,142 508 208 508 208 494,142 526 208 526,265 415 325 415 325 655') +
          lines(770, 490, '50 298 229 298,50 310 229 310,50 337 229 337,50 349 229 349,50 376 229 376,50 388 229 388,50 415 265 415,50 427 265 427,50 442 325 442,50 457 325 457,171 294 171 308,171 334 171 347,171 373 171 386') +
          boxes(770, 490, '88 469 97 485')
        }
        stroke="#fff"
      />
      <path
        d={
          lines(770, 490, '86 322 229 322,40 361 229 361,40 400 229 400,190 298 202 298,190 313 202 313,106 337 118 337,106 352 118 352,190 376 202 376,190 391 202 391,190 415 202 415,190 430 202 430,190 445 202 445,190 460 202 460,35 358 35 364,35 397 35 403') +
          boxes(770, 490, '82 295 89 314,214 295 221 314,82 334 89 353,214 334 221 353,82 373 89 392,214 373 221 392')
        }
        stroke="#f00"
      />
      <path
        d={
          boxes(
            770,
            490,
            '118 85 128 100,131 70 143 110,133 118 145 142,154 85 164 100,167 70 176 110,169 118 181 142,211 139 227 149,211 154 227 164,211 172 227 182,241 178 254 208,211 202 229 212,121 160 131 176,67 175 86 184,52 187 65 202,67 202 89 212,97 199 137 209,107 211 130 220,67 250 71 268,77 250 92 259,92 255 101 265,101 260 142 268,' +
              '145 238 148 256,151 238 169 247,172 241 191 250,202 238 229 247,194 238 196 256,145 262 148 280,151 262 169 271,172 265 191 274,202 262 229 271,194 262 196 280,148 286 160 296,148 301 158 310,145 310 164 320,148 325 160 334,148 337 160 340,145 340 166 349,145 352 166 361,145 364 160 374,148 379 160 388,142 391 164 400,148 406 160 415,151 418 160 427,148 430 160 440,151 448 160 457,' +
              '335 193 358 203,338 208 353 215,295 220 401 229,479 277 485 286,496 277 521 286,265 403 307 415,265 415 322 427,265 430 298 440,265 445 307 457,316 535 325 553,70 463 86 473,82 487 109 496,133 466 155 475,160 466 176 475,157 499 172 508,175 499 196 508,157 517 172 526,175 517 202 526,' +
              '229 34 238 76,244 40 254 76,262 22 271 76,280 40 289 76,295 55 304 76,310 52 319 76,325 40 334 76,340 34 352 76,354 34 365 76,373 43 383 80,388 40 398 80,403 40 412 76,229 82 238 97,244 82 254 97,262 79 271 97,277 85 289 95,295 91 304 95,310 91 319 95,325 88 334 94,340 88 350 94,358 85 370 94,370 85 382 94,388 79 398 94,400 79 410 97,418 85 428 94,430 85 440 94,445 79 454 94',
          ) + lines(770, 490, '289 95 289 373 241 373 241 415,145 247 232 247,145 271 232 271')
        }
        stroke="#0f0"
      />
      <path d={boxes(770, 490, '103 466 131 475,208 484 236 494,208 499 236 508,208 517 236 526')} stroke="#f0f" />
      <path d="M809 532l4-2v5zM821 531l4-1v5zM817 658l3-1v5zM817 664l3-1v5zM830 648l3-2v4z" fill="#fff" />
    </g>
  );
}

function TitleBlock() {
  return (
    <g>
      <path
        d={lines(990, 640, '70 103 313 103,70 118 313 118,70 133 313 133,70 151 313 151,91 88 91 166,118 88 118 166,226 88 226 226,262 88 262 226,70 181 190 181,70 196 190 196,70 211 190 211,226 181 448 181,226 196 313 196,190 211 313 211,103 166 103 226,142 166 142 226,190 166 190 226,493 166 493 190,331 181 331 205,349 181 349 205')}
        stroke="#f00"
      />
      <path
        d={boxes(990, 640, '67 88 616 226') + lines(990, 640, '313 88 313 226,448 88 448 226,67 166 313 166,313 151 448 151,313 205 448 205,367 151 367 205,418 151 418 205,379 205 379 226,448 118 616 118,448 166 616 166,448 190 616 190')}
        stroke="#fff"
      />
      <path
        d={
          boxes(990, 640, '454 97 614 112,73 151 88 163,97 151 112 163,154 151 190 163,235 151 250 163,271 151 298 163,76 166 94 178,76 181 94 193,76 199 94 208,76 214 94 223,199 175 215 185,199 199 217 208,199 214 214 223,325 160 353 169,379 160 401 169,427 160 440 169,319 187 326 200,337 187 344 200,391 187 394 200,427 187 440 199,328 211 353 220,397 211 421 220,460 172 479 181,526 172 599 181') +
          lines(990, 640, [454, 463, 469, 481, 490, 496, 505, 526, 535, 544, 562, 571, 580, 589, 598, 604, 613, 622, 628, 637].map((x) => `${x} ${x > 616 ? 193 : 199} ${x} 216`).join(',')) +
          lines(990, 640, '514 208 514 216,550 208 550 216')
        }
        stroke="#0f0"
      />
      <text x={1148} y={691} fontSize={7} fontWeight={700} fill="#0f0" fontFamily="Noto Sans CJK SC, sans-serif">
        牵引控制M2
      </text>
    </g>
  );
}

function Drawing() {
  return (
    <svg
      role="img"
      aria-label="13SFM0600 图纸"
      className="block h-full w-full bg-black"
      viewBox="251 178 1045 647"
      fill="none"
      shapeRendering="crispEdges"
    >
      <g transform="translate(.5 .5)">
        <Sheet />
        <Wiring />
        <Harness x1={595} x2={635} left={602} right={624} />
        <Harness x1={931} x2={970} left={938} right={960} />
        <MainCabinet />
        <SideCabinet />
        <TitleBlock />
        <path d="M479 725V696M474 705l5-10 5 10M479 725h31M499 720l11 5-11 5" stroke="#f0f" />
      </g>
    </svg>
  );
}

/* ---------- document area ---------- */

const DOCS = [
  { name: '10SFM0600-01...制TC.dwg', width: 'w-[172px]', pad: 'pl-[17px]' },
  { name: '11SFM0600-01...制Mp.dwg', width: 'w-[179px]', pad: 'pl-5' },
  { name: '12SFM0600-01...制M1.dwg', width: 'w-[168px]', pad: 'pl-[21px]' },
];

// Slanted left edge of a document tab
function TabEdge({ fill }: { fill: string }) {
  return (
    <svg className="h-[19px] w-[18px] shrink-0" viewBox="0 0 18 19" fill="none">
      <path d="M0 19L17 .5h1V19z" fill={fill} />
      <path d="M0 19L17 .5h1" stroke="#8c8c8c" />
    </svg>
  );
}

function DocumentTabs() {
  return (
    <div role="tablist" className="flex h-[22px] shrink-0 items-end overflow-hidden bg-[#e6e6e6] pl-[3px] text-[12px] text-[#333]">
      <TabEdge fill="#f0f0f0" />
      {DOCS.map((doc, n) => (
        <button
          key={doc.name}
          role="tab"
          aria-selected={false}
          className={clsx(
            'h-[19px] shrink-0 border-t border-[#8c8c8c] bg-[#f0f0f0] text-left leading-[18px] whitespace-nowrap',
            NARROW_FONT,
            doc.width,
            doc.pad,
            n < 2 && 'border-r',
          )}
        >
          {doc.name}
        </button>
      ))}
      <div className="flex h-[19px] shrink-0">
        <span className="flex bg-[linear-gradient(#8c8c8c_1px,#f0f0f0_1px)]">
          <TabEdge fill="#fff" />
        </span>
        <button role="tab" aria-selected className="w-[174px] border-t border-[#8c8c8c] bg-white pl-[9px] text-left leading-[18px] font-bold whitespace-nowrap">
          13SFM0600-01...制M2.dwg
        </button>
        <button aria-label="关闭" className="flex w-[15px] items-center border-t border-r border-[#8c8c8c] bg-white">
          <svg className="h-2 w-2" viewBox="0 0 8 8" stroke="#444" strokeWidth={1.3}><path d="M.5.5l7 7M7.500.5l-7 7" /></svg>
        </button>
      </div>
    </div>
  );
}

function LayoutTabs() {
  return (
    <div className="flex h-[17px] shrink-0 items-start bg-[#e6e6e6] text-[13px] leading-4 text-[#444]">
      <svg className="h-[17px] w-[64px]" viewBox="0 0 64 17" fill="#666">
        <path d="M3 6h1v7H3zM9 6v7L5 9.500zM24 6v7l-4-3.500zM37 6v7l4-3.500zM51 6v7l4-3.500zM57 6h1v7h-1z" />
      </svg>
      <button className="flex h-4 items-start font-bold">
        <svg className="h-4 w-[9px]" viewBox="0 0 9 16" fill="#fff"><path d="M1 0h8v15.500H9z" /><path d="M1 0l8 15.500" fill="none" stroke="#888" /></svg>
        <span className="border-b border-[#888] bg-white px-px leading-[15px]">模型</span>
        <svg className="h-4 w-[11px]" viewBox="0 0 11 16" fill="#fff"><path d="M0 0h10L3 15.500H0z" /><path d="M0 15.500h3L10 0" fill="none" stroke="#888" /></svg>
      </button>
      <button className="flex h-4 items-start">
        <svg className="h-4 w-[5px]" viewBox="0 0 5 16" fill="none" stroke="#999"><path d="M-3 8L2 15.500h3" /></svg>
        <span className="border-b border-[#999] leading-[15px]">布局1</span>
        <svg className="h-4 w-3" viewBox="0 0 12 16" fill="none" stroke="#999"><path d="M0 15.500h4L11 0" /></svg>
      </button>
    </div>
  );
}

function DockStrip() {
  return (
    <div className="flex w-[25px] shrink-0 flex-col items-center bg-[#e6e6e6] pt-[7px]">
      <button className="flex flex-col items-center text-[12px] text-[#333]">
        <svg className="h-4 w-4" viewBox="0 0 16 16" fill="none" stroke="#222">
          <path d="M1 7c0-3 2-4 5-4" strokeWidth={1.5} />
          <path d="M5 .5L8 3 5 5.500z" fill="#222" />
          <path d="M8.5 2.500h6v2h-6zM10.500 5h2v4h-2z" fill="#ddd" />
          <path d="M1.5 11.500h13v3h-13z" fill="#ccc" />
        </svg>
        <span className="leading-4 [text-orientation:sideways] [writing-mode:vertical-rl]">图库</span>
      </button>
    </div>
  );
}

export default function App() {
  return (
    <div className={clsx('relative flex h-screen flex-col overflow-hidden bg-[#e6e6e6]', UI_FONT)}>
      <Header />
      <Ribbon />
      <div className="flex min-h-0 flex-1">
        <DockStrip />
        <div className="flex min-w-0 flex-1 flex-col">
          <div className="flex min-h-0 flex-1">
            <PropertyPanel />
            <main className="ml-1.5 flex min-w-0 flex-1 flex-col">
              <DocumentTabs />
              <div className="min-h-0 flex-1">
                <Drawing />
              </div>
              <LayoutTabs />
            </main>
          </div>
          <div className="h-1.5 shrink-0 bg-[#cdcdcd]" />
          <div className="h-2 shrink-0 overflow-hidden pl-[5px] text-[13px] leading-[22px] text-[#444]">命令行</div>
        </div>
      </div>
      <p className="absolute right-[14px] bottom-1.5 font-['Liberation_Sans',sans-serif] text-[18px] leading-7 text-[#8f8f8f] [text-shadow:-1px_-1px_0_#fff]">
        CSDN @biyezuopinvip
      </p>
    </div>
  );
}
